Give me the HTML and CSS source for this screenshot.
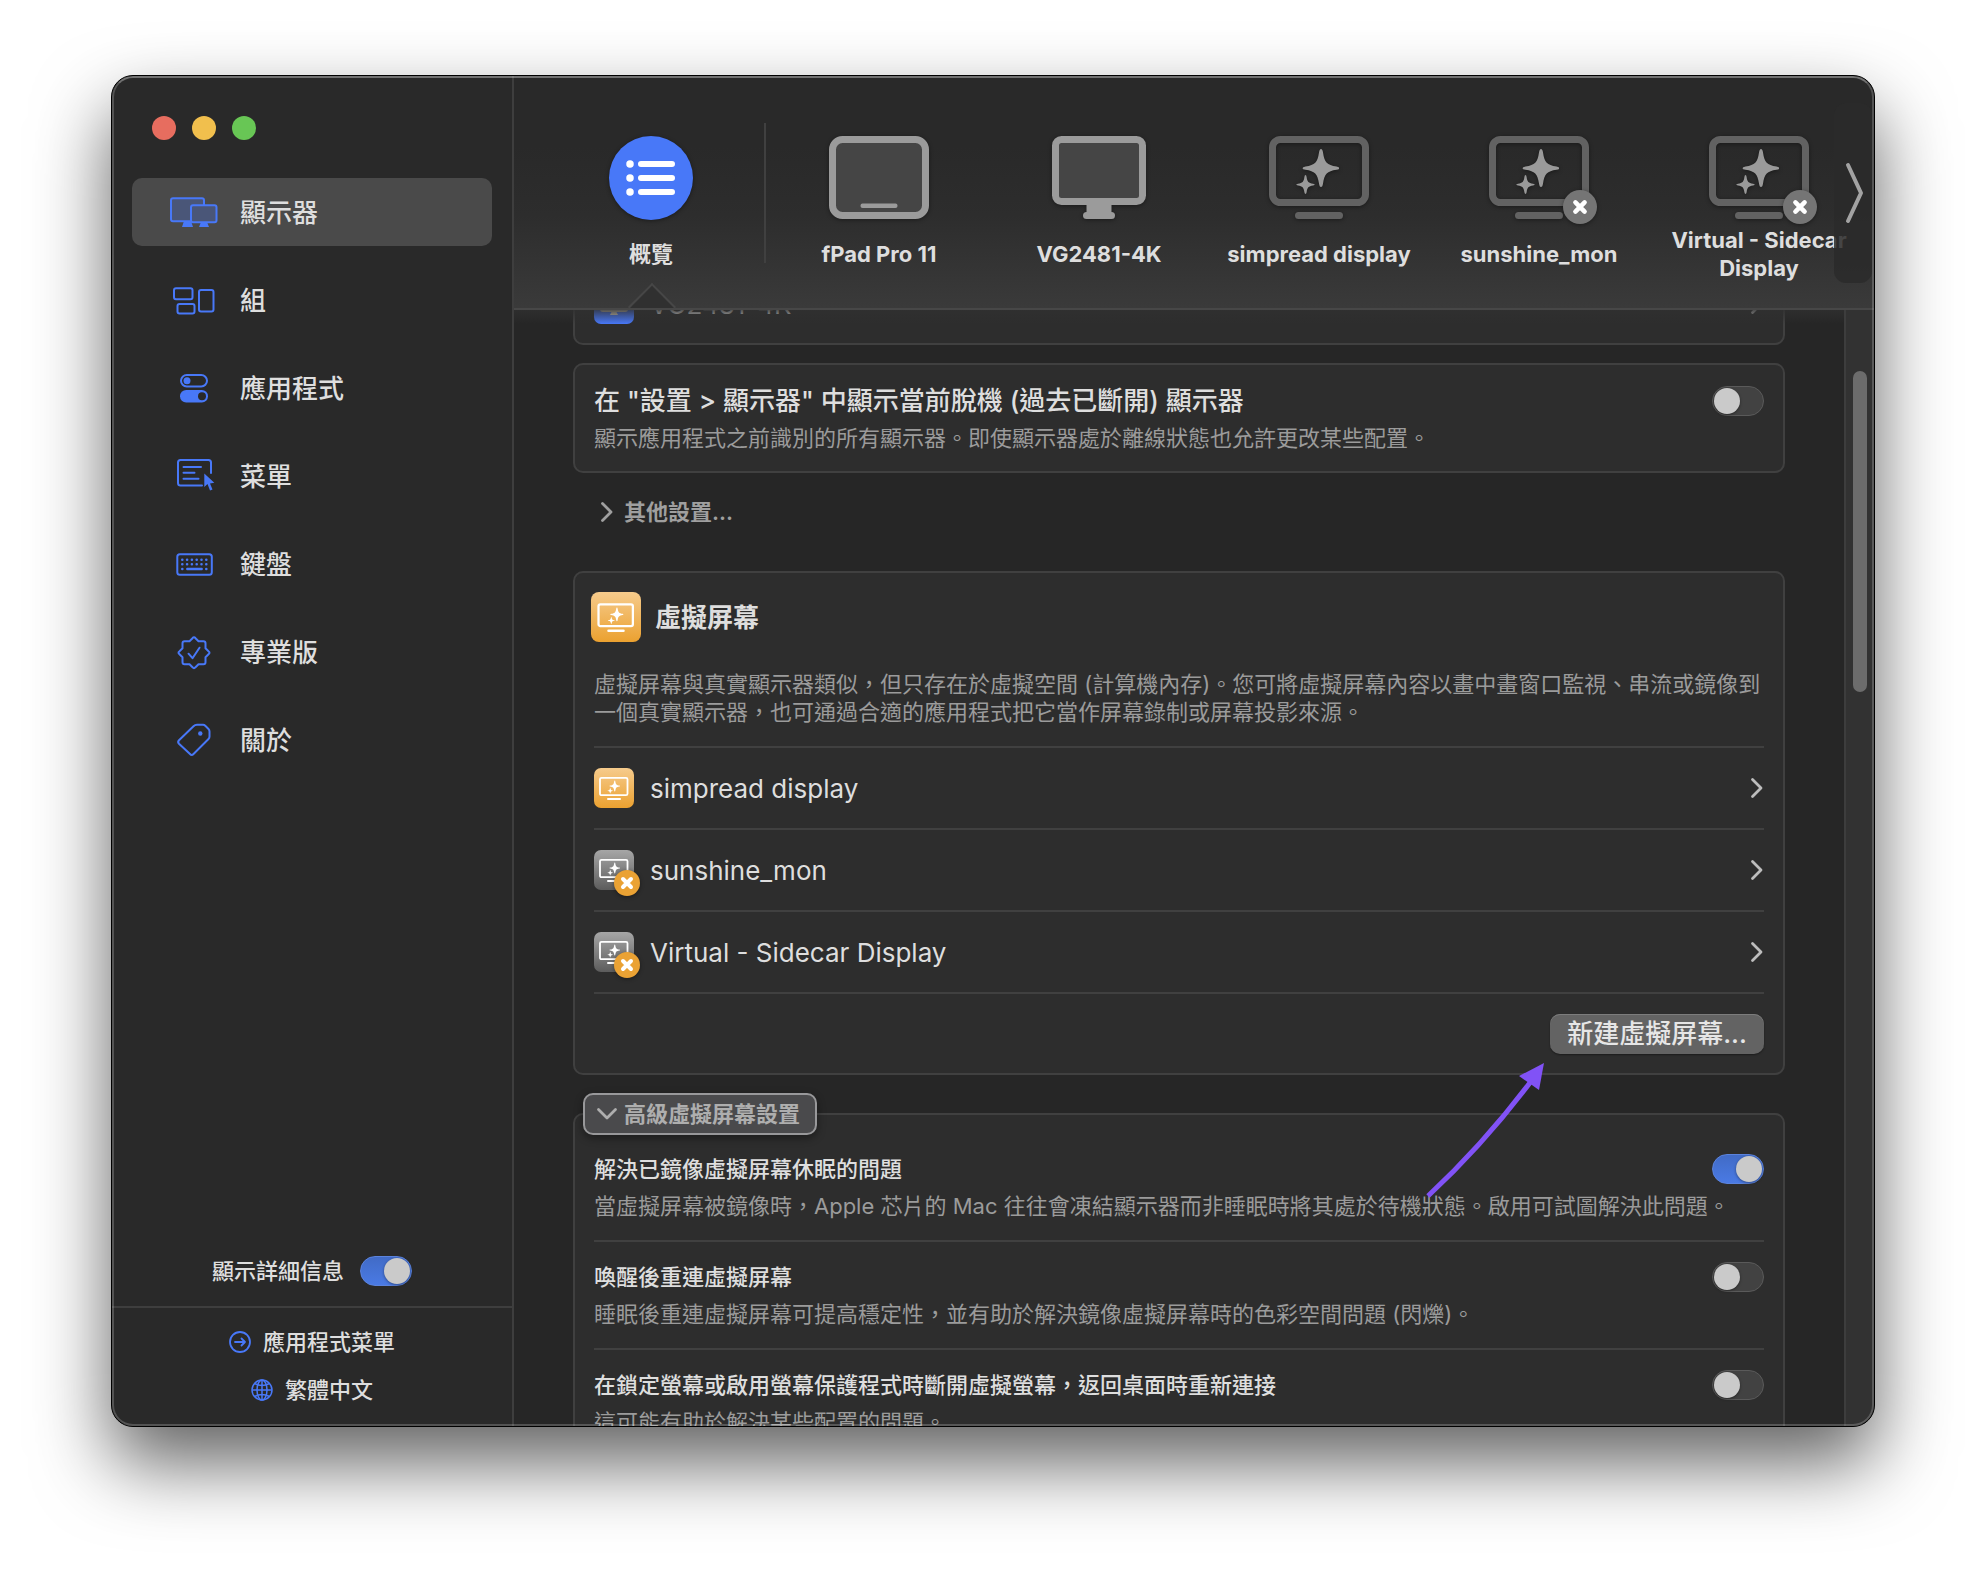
FILE: index.html
```html
<!DOCTYPE html>
<html lang="zh-Hant">
<head>
<meta charset="utf-8">
<meta name="viewport" content="width=device-width, initial-scale=1">
<title>顯示器</title>
<link rel="stylesheet" href="styles.css">
</head>
<body>
<svg class="sprite" aria-hidden="true">
  <symbol id="chevron" viewBox="0 0 14 24"><path d="M2.500 3.500L11 12L2.500 20.500" fill="none" stroke="currentColor" stroke-width="2.800" stroke-linecap="round" stroke-linejoin="round"/></symbol>
  <symbol id="sparkles" viewBox="0 0 48 48">
    <path d="M30 3Q31.500 3 32 6.500C33.500 16.500 36 19 45.500 20.500Q48.500 21.200 48.500 22.200Q48.500 23.200 45.500 23.800C36 25.200 33.500 28 32 37.500Q31.500 41 30 41Q28.500 41 28 37.500C26.500 28 24 25.200 14.500 23.800Q11.500 23.200 11.500 22.200Q11.500 21.200 14.500 20.500C24 19 26.500 16.500 28 6.500Q28.500 3 30 3Z" fill="currentColor"/>
    <path d="M14.500 29Q15.300 29 15.600 31C16.300 35.800 17.500 37 22 37.700Q23.800 38 23.800 38.600Q23.800 39.200 22 39.500C17.500 40.200 16.300 41.500 15.600 46.200Q15.300 48 14.500 48Q13.700 48 13.400 46.200C12.700 41.500 11.500 40.200 7 39.500Q5.200 39.200 5.200 38.600Q5.200 38 7 37.700C11.500 37 12.700 35.800 13.400 31Q13.700 29 14.500 29Z" fill="currentColor"/>
  </symbol>
  <symbol id="virtual" viewBox="0 0 100 84">
    <rect x="3.500" y="3.500" width="93" height="63" rx="8" fill="none" stroke="#626262" stroke-width="7"/>
    <rect x="26" y="76" width="48" height="7" rx="3.500" fill="#626262"/>
    <use href="#sparkles" x="22" y="10" width="48" height="48" color="#9a9a9a"/>
  </symbol>
  <symbol id="virtual-small" viewBox="0 0 40 40">
    <rect x="6" y="9.800" width="27.500" height="17.400" rx="1.500" fill="none" stroke="#fff" stroke-width="1.800"/>
    <path d="M14 31H26" stroke="#fff" stroke-width="2" stroke-linecap="round"/>
    <use href="#sparkles" x="12" y="11.500" width="14" height="14" color="#fff"/>
  </symbol>
  <symbol id="cross" viewBox="0 0 14 14"><path d="M3 3L11 11M11 3L3 11" stroke="#fff" stroke-width="4" stroke-linecap="round"/></symbol>
</svg>

<div class="window">
  <aside class="sidebar">
    <div class="lights">
      <button class="light red" aria-label="關閉"></button>
      <button class="light yellow" aria-label="最小化"></button>
      <button class="light green" aria-label="全螢幕"></button>
    </div>
    <nav class="nav">
      <a href="#displays" class="nav-item active" aria-current="page">
        <svg class="nav-icon" viewBox="0 0 52 40"><g fill="#4a5678" stroke="#4878f8" stroke-width="2"><path d="M14 35L16 29H23L25 35Z" fill="#4878f8" stroke="none"/><rect x="3" y="6.300" width="33" height="23" rx="2"/><path d="M31 35L33 30H39L41 35Z" fill="#4878f8" stroke="none"/><rect x="23" y="13.300" width="25.500" height="17" rx="2"/></g></svg>
        <span>顯示器</span></a>
      <a href="#groups" class="nav-item">
        <svg class="nav-icon" viewBox="0 0 52 40"><g fill="none" stroke="#4878f8" stroke-width="2"><rect x="6" y="8.300" width="18.500" height="11" rx="2"/><rect x="9.500" y="24" width="17" height="9.500" rx="2"/><rect x="31" y="10" width="14.500" height="21.500" rx="2"/></g></svg>
        <span>組</span></a>
      <a href="#apps" class="nav-item">
        <svg class="nav-icon" viewBox="0 0 52 40"><rect x="13" y="7" width="26" height="11.500" rx="5.750" fill="none" stroke="#4878f8" stroke-width="2"/><circle cx="19" cy="12.800" r="3.500" fill="#4878f8"/><rect x="12" y="22" width="28" height="12.500" rx="6.200" fill="#4878f8"/><circle cx="34" cy="28.200" r="4" fill="#292929"/></svg>
        <span>應用程式</span></a>
      <a href="#menu" class="nav-item">
        <svg class="nav-icon" viewBox="0 0 52 40"><path d="M43 17V6.500Q43 4 40.500 4H12.500Q10 4 10 6.500V27Q10 29.500 12.500 29.500H34M15.500 11H33M15.500 16.700H26.500M15.500 22.700H30.500" fill="none" stroke="#4878f8" stroke-width="2" stroke-linecap="round"/><path d="M36.300 17.500V31L39.500 28L42 34.500L44.500 33.500L42 27.500L46.300 26.800Z" fill="#4878f8"/></svg>
        <span>菜單</span></a>
      <a href="#keyboard" class="nav-item">
        <svg class="nav-icon" viewBox="0 0 52 40"><rect x="9.300" y="10.300" width="34.500" height="20.500" rx="2.500" fill="none" stroke="#4878f8" stroke-width="2"/><path d="M14.300 15.700H38.400M14.300 20.300H38.400" stroke="#4878f8" stroke-width="2.600" stroke-linecap="round" stroke-dasharray="0 4.800"/><path d="M14.300 25H14.310M38.300 25H38.310" stroke="#4878f8" stroke-width="2.600" stroke-linecap="round"/><path d="M19.300 25H33.700" stroke="#4878f8" stroke-width="2.400" stroke-linecap="round"/></svg>
        <span>鍵盤</span></a>
      <a href="#pro" class="nav-item">
        <svg class="nav-icon" viewBox="0 0 52 40"><g transform="translate(26 20.700)" fill="none" stroke="#4878f8" stroke-width="2" stroke-linejoin="round" stroke-linecap="round"><path d="M-1.500 -14.500Q0 -16.500 1.500 -14.500L4.500 -11.500H9.500Q11.500 -11.500 11.500 -9.500V-4.500L14.500 -1.500Q16.500 0 14.500 1.500L11.500 4.500V9.500Q11.500 11.500 9.500 11.500H4.500L1.500 14.500Q0 16.500 -1.500 14.500L-4.500 11.500H-9.500Q-11.500 11.500 -11.500 9.500V4.500L-14.500 1.500Q-16.500 0 -14.500 -1.500L-11.500 -4.500V-9.500Q-11.500 -11.500 -9.500 -11.500H-4.500Z"/><path d="M-5.500 1L-1.500 5.500L5.500 -5"/></g></svg>
        <span>專業版</span></a>
      <a href="#about" class="nav-item">
        <svg class="nav-icon" viewBox="0 0 52 40"><path d="M29 4.800H35Q36.300 4.800 37.500 6L40.500 9Q41.500 10 41.500 11.500V16.500Q41.500 18 40.500 19L25.500 34Q23.700 35.800 22 34L11 23.800Q9.300 22 11 20.200L25.500 6.200Q27 4.800 29 4.800Z" fill="none" stroke="#4878f8" stroke-width="2" stroke-linejoin="round"/><circle cx="32.300" cy="13.500" r="2.200" fill="#4878f8"/></svg>
        <span>關於</span></a>
    </nav>
    <div class="details">
      <label for="details-switch">顯示詳細信息</label>
      <input class="switch" id="details-switch" type="checkbox" role="switch" checked>
    </div>
    <div class="side-footer">
      <button class="side-link"><svg viewBox="0 0 22 22"><g fill="none" stroke="#4878f8" stroke-width="1.800" stroke-linecap="round" stroke-linejoin="round"><circle cx="11" cy="11" r="10"/><path d="M6 11H16M12.500 7.500L16 11L12.500 14.500"/></g></svg>應用程式菜單</button>
      <button class="side-link"><svg viewBox="0 0 22 22"><g fill="none" stroke="#4878f8" stroke-width="1.500"><circle cx="11" cy="11" r="10"/><ellipse cx="11" cy="11" rx="5" ry="10"/><path d="M11 1V21M1 11H21M3.500 4.500Q11 8.500 18.500 4.500M3.500 17.500Q11 13.500 18.500 17.500"/></g></svg>繁體中文</button>
    </div>
  </aside>

  <main class="main">
    <header class="toolbar">
      <button class="tab selected">
        <span class="tab-icon"><svg width="84" height="84" viewBox="0 0 84 84"><circle cx="42" cy="42" r="42" fill="#4878f8"/><path d="M32 28H63M32 42H63M32 56H63" stroke="#fff" stroke-width="6" stroke-linecap="round"/><path d="M21 28H21.010M21 42H21.010M21 56H21.010" stroke="#fff" stroke-width="7.500" stroke-linecap="round"/></svg></span>
        <span class="tab-label">概覽</span>
      </button>
      <span class="tab-divider"></span>
      <button class="tab">
        <span class="tab-icon"><svg width="100" height="84" viewBox="0 0 100 84"><rect x="3.500" y="3.500" width="93" height="76" rx="10" fill="#454545" stroke="#9b9b9b" stroke-width="7"/><rect x="31.500" y="67.500" width="37" height="4.500" rx="2" fill="#9b9b9b"/></svg></span>
        <span class="tab-label">fPad Pro 11</span>
      </button>
      <button class="tab">
        <span class="tab-icon"><svg width="94" height="84" viewBox="0 0 94 84"><path d="M34.500 66H59.500V77H34.500Z" fill="#9b9b9b"/><rect x="31" y="76" width="32" height="7" rx="3.500" fill="#9b9b9b"/><rect x="3.500" y="3.500" width="87" height="62" rx="6" fill="#454545" stroke="#9b9b9b" stroke-width="7"/></svg></span>
        <span class="tab-label">VG2481-4K</span>
      </button>
      <button class="tab">
        <span class="tab-icon"><svg width="100" height="84"><use href="#virtual"/></svg></span>
        <span class="tab-label">simpread display</span>
      </button>
      <button class="tab">
        <span class="tab-icon"><svg width="100" height="84"><use href="#virtual"/></svg><span class="badge"><svg width="16" height="16"><use href="#cross"/></svg></span></span>
        <span class="tab-label">sunshine_mon</span>
      </button>
      <button class="tab">
        <span class="tab-icon"><svg width="100" height="84"><use href="#virtual"/></svg><span class="badge"><svg width="16" height="16"><use href="#cross"/></svg></span></span>
        <span class="tab-label">Virtual - Sidecar Display</span>
      </button>
      <button class="more" aria-label="更多顯示器"><svg width="20" height="64" viewBox="0 0 20 64"><path d="M3 4L16 32L3 60" fill="none" stroke="#a2a2a2" stroke-width="4" stroke-linecap="round" stroke-linejoin="round"/></svg></button>
    </header>

    <div class="body">
      <div class="scroller">
        <section class="card first">
          <a href="#vg2481" class="row last">
            <span class="tile blue"><svg width="40" height="40" viewBox="0 0 40 40"><rect x="7" y="9" width="26" height="18" rx="2" fill="none" stroke="#d9d2c2" stroke-width="2"/><path d="M18 27H22L24 31H16Z" fill="#d9d2c2"/></svg></span>
            <span class="row-name">VG2481-4K</span>
            <svg class="go"><use href="#chevron"/></svg>
          </a>
        </section>

        <section class="card offline">
          <div class="setting">
            <label class="title large" for="offline-switch">在 "設置 &gt; 顯示器" 中顯示當前脫機 (過去已斷開) 顯示器</label>
            <input class="switch" id="offline-switch" type="checkbox" role="switch">
          </div>
          <p class="note">顯示應用程式之前識別的所有顯示器。即使顯示器處於離線狀態也允許更改某些配置。</p>
        </section>

        <button class="disclosure"><svg class="go"><use href="#chevron"/></svg>其他設置...</button>

        <section class="card virtual">
          <h2 class="card-head"><span class="tile head orange"><svg width="50" height="50"><use href="#virtual-small"/></svg></span><span class="head-name">虛擬屏幕</span></h2>
          <p class="note intro">虛擬屏幕與真實顯示器類似，但只存在於虛擬空間 (計算機內存)。您可將虛擬屏幕內容以畫中畫窗口監視、串流或鏡像到一個真實顯示器，也可通過合適的應用程式把它當作屏幕錄制或屏幕投影來源。</p>
          <a href="#simpread" class="row">
            <span class="tile orange"><svg width="40" height="40"><use href="#virtual-small"/></svg></span>
            <span class="row-name">simpread display</span>
            <svg class="go"><use href="#chevron"/></svg>
          </a>
          <a href="#sunshine" class="row">
            <span class="tile gray"><svg width="40" height="40"><use href="#virtual-small"/></svg><span class="badge small"><svg width="14" height="14"><use href="#cross"/></svg></span></span>
            <span class="row-name">sunshine_mon</span>
            <svg class="go"><use href="#chevron"/></svg>
          </a>
          <a href="#sidecar" class="row">
            <span class="tile gray"><svg width="40" height="40"><use href="#virtual-small"/></svg><span class="badge small"><svg width="14" height="14"><use href="#cross"/></svg></span></span>
            <span class="row-name">Virtual - Sidecar Display</span>
            <svg class="go"><use href="#chevron"/></svg>
          </a>
          <div class="actions">
            <button class="create">新建虛擬屏幕...</button>
            <svg class="pointer" width="130" height="144" viewBox="0 0 130 144" aria-hidden="true"><path d="M8 138Q64 86 112 22" fill="none" stroke="#8152f6" stroke-width="5"/><path d="M124 5L99 18L119 32Z" fill="#8152f6"/></svg>
          </div>
        </section>

        <section class="card advanced">
          <button class="disclosure open"><svg class="go"><use href="#chevron"/></svg>高級虛擬屏幕設置</button>
          <div class="option">
            <div class="setting">
              <label class="title" for="sleep-switch">解決已鏡像虛擬屏幕休眠的問題</label>
              <input class="switch" id="sleep-switch" type="checkbox" role="switch" checked>
            </div>
            <p class="note">當虛擬屏幕被鏡像時，Apple 芯片的 Mac 往往會凍結顯示器而非睡眠時將其處於待機狀態。啟用可試圖解決此問題。</p>
          </div>
          <div class="option">
            <div class="setting">
              <label class="title" for="wake-switch">喚醒後重連虛擬屏幕</label>
              <input class="switch" id="wake-switch" type="checkbox" role="switch">
            </div>
            <p class="note">睡眠後重連虛擬屏幕可提高穩定性，並有助於解決鏡像虛擬屏幕時的色彩空間問題 (閃爍)。</p>
          </div>
          <div class="option">
            <div class="setting">
              <label class="title" for="lock-switch">在鎖定螢幕或啟用螢幕保護程式時斷開虛擬螢幕，返回桌面時重新連接</label>
              <input class="switch" id="lock-switch" type="checkbox" role="switch">
            </div>
            <p class="note">這可能有助於解決某些配置的問題。</p>
          </div>
        </section>
      </div>
      <div class="scrollbar"><div class="thumb"></div></div>
    </div>
  </main>
</div>
</body>
</html>
```
FILE: styles.css
```css
* { box-sizing: border-box; }

body {
  margin: 0;
  height: 100vh;
  padding: 75px 111px 147px;
  background: #fff;
  color: #dedede;
  font-family: Inter, "Noto Sans CJK TC", sans-serif;
  font-size: 22px;
  line-height: 28px;
  overflow: hidden;
}

button {
  margin: 0;
  padding: 0;
  border: 0;
  background: none;
  color: inherit;
  font: inherit;
}

a { color: inherit; text-decoration: none; }
h2, p { margin: 0; }
svg { display: block; flex: none; }
.sprite { position: absolute; width: 0; height: 0; }

.window {
  position: relative;
  display: flex;
  height: 100%;
  border: 1px solid #000;
  border-radius: 22px;
  background: #262626;
  box-shadow: 0 36px 76px rgba(0, 0, 0, .62);
  overflow: hidden;
}

/* light rim along the window's inner edge */
.window::after {
  content: "";
  position: absolute;
  inset: 0;
  z-index: 5;
  border: 2px solid rgba(255, 255, 255, .2);
  border-top-color: rgba(255, 255, 255, .34);
  border-radius: 21px;
  pointer-events: none;
}

/* sidebar */
.sidebar {
  display: flex;
  flex: none;
  flex-direction: column;
  width: 402px;
  border-right: 2px solid #3e3e3e;
  background: #292929;
}

.lights { display: flex; gap: 16px; padding: 40px 40px 38px; }
.light { width: 24px; height: 24px; border-radius: 50%; }
.red { background: #e76d5f; }
.yellow { background: #f1bf4d; }
.green { background: #68c655; }

.nav {
  display: flex;
  flex: 1;
  flex-direction: column;
  gap: 20px;
  padding: 0 20px;
}
.nav-item {
  display: flex;
  align-items: center;
  gap: 20px;
  height: 68px;
  padding-left: 36px;
  border-radius: 10px;
  font-size: 26px;
  font-weight: 500;
}
.nav-item span, .row-name, .head-name { padding-top: 2px; }
.nav-item.active { background: #4a4a4a; }
.nav-icon { width: 52px; height: 40px; }

.details {
  display: flex;
  align-items: center;
  justify-content: center;
  gap: 16px;
  padding-bottom: 20px;
  font-weight: 500;
}

.side-footer {
  display: flex;
  flex-direction: column;
  align-items: center;
  gap: 20px;
  padding: 20px 0 22px;
  border-top: 2px solid #3e3e3e;
}
.side-link {
  display: flex;
  align-items: center;
  gap: 12px;
  font-weight: 500;
}
.side-link svg { width: 22px; height: 22px; }

/* switch */
.switch {
  appearance: none;
  flex: none;
  width: 52px;
  height: 30px;
  margin: 0;
  padding: 1px;
  border: 1px solid #5a5a5a;
  border-radius: 15px;
  background: #424242;
}
.switch::before {
  content: "";
  display: block;
  width: 26px;
  height: 26px;
  border-radius: 50%;
  background: #cacaca;
  box-shadow: 0 1px 3px rgba(0, 0, 0, .4);
}
.switch:checked {
  border-color: #5b83dd;
  background: linear-gradient(#416bc6, #4a7ae4);
}
.switch:checked::before { margin-left: auto; }

/* toolbar */
.main { display: flex; flex: 1; flex-direction: column; min-width: 0; }

.toolbar {
  position: relative;
  z-index: 2;
  display: flex;
  flex: none;
  height: 234px;
  padding: 47px 0 0 27px;
  border-bottom: 2px solid #474747;
  background: linear-gradient(#292929 30%, #2d2d2d 60%, #3a3a3a);
}
/* content fades out as it scrolls under the toolbar */
.toolbar::after {
  content: "";
  position: absolute;
  top: calc(100% + 2px);
  left: 0;
  right: 30px;
  height: 14px;
  background: linear-gradient(rgba(48, 48, 48, .8), rgba(48, 48, 48, 0));
}
.tab {
  position: relative;
  display: flex;
  flex: none;
  flex-direction: column;
  align-items: center;
  gap: 6px;
  width: 220px;
  padding-top: 13px;
}
.tab-icon { position: relative; }
.tab-icon > svg { filter: drop-shadow(0 1px 2px rgba(0, 0, 0, .4)); }
.tab-label {
  display: flex;
  align-items: center;
  height: 56px;
  padding: 0 12px;
  font-weight: 700;
  text-align: center;
}
/* notch under the selected tab */
.tab.selected::after {
  content: "";
  position: absolute;
  left: 94px;
  bottom: -16px;
  width: 32px;
  height: 32px;
  border: solid #474747;
  border-width: 2px 0 0 2px;
  background: linear-gradient(135deg, #303030 50%, transparent 50%);
  transform: rotate(45deg);
}
.tab-divider {
  flex: none;
  width: 2px;
  height: 140px;
  margin: 0 3px;
  background: #404040;
}
.badge {
  position: absolute;
  right: -8px;
  bottom: -4px;
  display: flex;
  align-items: center;
  justify-content: center;
  width: 34px;
  height: 34px;
  border-radius: 50%;
  background: #757575;
  box-shadow: 0 1px 4px rgba(0, 0, 0, .4);
}
.badge.small {
  right: -6px;
  bottom: -6px;
  width: 26px;
  height: 26px;
  background: #eaa234;
}
.more {
  position: absolute;
  top: 27px;
  right: 2px;
  display: flex;
  align-items: center;
  justify-content: center;
  width: 38px;
  height: 180px;
  padding-left: 3px;
  border-radius: 12px;
  background: rgba(42, 42, 42, .85);
}

/* content */
.body { display: flex; flex: 1; min-height: 0; }

.scroller {
  flex: 1;
  min-width: 0;
  margin-top: -47px;
  padding: 0 59px;
  overflow: hidden;
}
.card {
  position: relative;
  padding: 0 19px 19px;
  border: 2px solid #404040;
  border-radius: 10px;
  background: #2d2d2d;
}
.card.first { padding-top: 19px; }

.row {
  display: flex;
  align-items: center;
  gap: 16px;
  height: 82px;
  border-bottom: 2px solid #404040;
  font-size: 26px;
}
.row.last { height: 40px; border: 0; }
.row-name { flex: 1; }
.go { width: 14px; height: 24px; color: #bdbdbd; }

.tile { position: relative; flex: none; border-radius: 7px; }
.tile.head { margin-left: -3px; border-radius: 8px; }
.blue { background: #4878f8; }
.orange { background: linear-gradient(#f6cb8c, #eba130); }
.gray { background: linear-gradient(#a6a6a6, #5c5c5c); }

.offline { margin-top: 18px; padding: 21px 19px 19px; }
.setting { display: flex; align-items: center; justify-content: space-between; }
.title { font-weight: 500; }
.title.large { font-size: 26px; }
.note { margin-top: 8px; color: #9b9b9b; }

.disclosure {
  display: flex;
  align-items: center;
  gap: 10px;
  height: 42px;
  margin: 18px 0 38px 27px;
  color: #9f9f9f;
  font-weight: 600;
}
.disclosure .go { color: inherit; }

.card-head {
  display: flex;
  align-items: center;
  gap: 14px;
  padding-top: 19px;
  font-size: 26px;
  font-weight: 600;
}
.note.intro {
  margin-top: 28px;
  padding-bottom: 20px;
  border-bottom: 2px solid #404040;
}

.actions { position: relative; display: flex; justify-content: flex-end; padding-top: 20px; }
.create {
  width: 214px;
  height: 40px;
  border-radius: 10px;
  background: #636363;
  box-shadow: inset 0 1px #7c7c7c, 0 1px 2px rgba(0, 0, 0, .4);
  color: #e6e6e6;
  font-size: 26px;
  font-weight: 500;
}
/* annotation arrow drawn over the cards */
.pointer {
  position: absolute;
  top: 64px;
  right: 214px;
  z-index: 1;
  pointer-events: none;
}
.virtual { z-index: 1; }

.advanced { margin-top: 38px; }
.disclosure.open {
  position: absolute;
  top: -22px;
  left: 8px;
  margin: 0;
  padding: 0 15px;
  border: 2px solid #98989a;
  border-radius: 10px;
  background: #4a4a4c;
  box-shadow: 0 3px 8px rgba(0, 0, 0, .4);
  color: #aeaeae;
}
.open .go { transform: rotate(90deg); }
.option {
  height: 108px;
  padding-top: 20px;
  border-bottom: 2px solid #404040;
}
.disclosure.open + .option { height: 127px; padding-top: 39px; }

/* scrollbar */
.scrollbar {
  flex: none;
  width: 30px;
  padding: 61px 7px 0;
  border-left: 2px solid #3d3d3d;
  background: #323232;
}
.thumb { width: 14px; height: 321px; border-radius: 7px; background: #6c6c6c; }
```
